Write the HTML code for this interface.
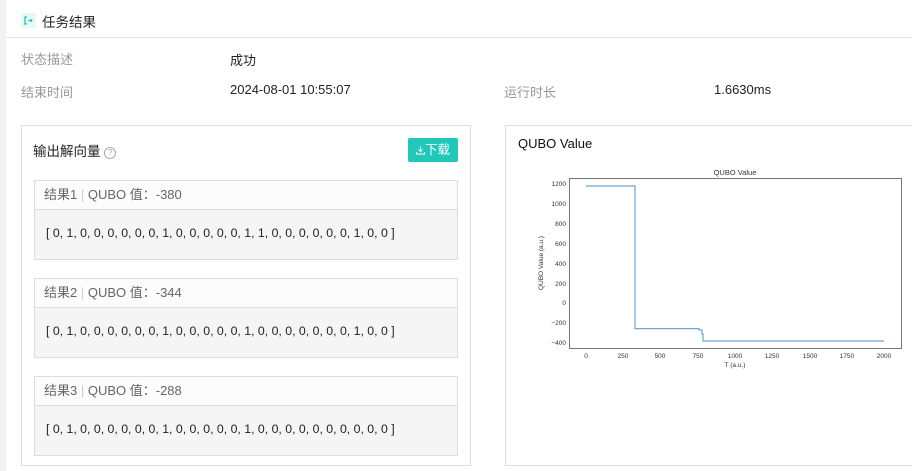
<!DOCTYPE html>
<html><head><meta charset="utf-8"><style>
html,body{margin:0;width:912px;height:471px;overflow:hidden}
body{background:#fff;font-family:"Liberation Sans","Noto Sans CJK SC",sans-serif;position:relative;color:#222}
.a{position:absolute;white-space:nowrap}
.lbl{color:#999;font-size:13px}
.val{color:#222;font-size:13px}
.card{position:absolute;border:1px solid #ddd;background:#fff;box-sizing:border-box}
.res{position:absolute;left:34px;width:424px;border:1px solid #ddd;box-sizing:border-box}
.res .h{height:28px;background:#fcfcfc;border-bottom:1px solid #ddd;font-size:13px;color:#666;line-height:28px;padding-left:9px}
.res .b{height:49px;background:#f5f5f5;font-size:12.3px;color:#222;line-height:46px;padding-left:11px}
</style></head><body>
<div class="a" style="left:0;top:0;width:6px;height:471px;background:#f2f2f2"></div>
<div class="a" style="left:6px;top:37px;width:906px;height:1px;background:#e2e2e2"></div>
<div class="a" style="left:21px;top:13px;width:15px;height:15px;background:#e8f8f7"></div>
<svg class="a" style="left:21px;top:13px" width="15" height="15"><path d="M6 4H4v7h2" stroke="#1fc2b4" stroke-width="1.3" fill="none"/><path d="M7 7.5h4M9.5 6l1.5 1.5L9.5 9" stroke="#1fc2b4" stroke-width="1.1" fill="none"/></svg>
<div class="a" style="left:42px;top:11px;font-size:13.5px;color:#222">任务结果</div>
<div class="a lbl" style="left:21px;top:49px">状态描述</div>
<div class="a val" style="left:230px;top:50px">成功</div>
<div class="a lbl" style="left:21px;top:82px">结束时间</div>
<div class="a val" style="left:230px;top:82px">2024-08-01 10:55:07</div>
<div class="a lbl" style="left:504px;top:82px">运行时长</div>
<div class="a val" style="left:714px;top:82px">1.6630ms</div>
<div class="card" style="left:21px;top:125px;width:450px;height:341px"></div>
<div class="a" style="left:33px;top:140px;font-size:13.5px;color:#222">输出解向量 <span style="display:inline-block;width:10px;height:10px;border:1px solid #aaa;border-radius:50%;font-size:8px;line-height:10px;text-align:center;color:#aaa;vertical-align:1px">?</span></div>
<div class="a" style="left:408px;top:138px;width:50px;height:24px;background:#1fc8b8;border-radius:2px;color:#fff;font-size:12.5px;line-height:24px;text-align:center"><svg width="9" height="9" style="vertical-align:-1px"><path d="M4.5 0.5v5M2.5 3.5l2 2 2-2M0.5 6v2h8V6" stroke="#fff" stroke-width="1" fill="none"/></svg>下载</div>
<div class="res" style="top:180px"><div class="h">结果1 <span style="color:#ccc">|</span> QUBO 值：-380</div><div class="b">[ 0, 1, 0, 0, 0, 0, 0, 0, 1, 0, 0, 0, 0, 0, 1, 1, 0, 0, 0, 0, 0, 0, 1, 0, 0 ]</div></div>
<div class="res" style="top:278px"><div class="h">结果2 <span style="color:#ccc">|</span> QUBO 值：-344</div><div class="b">[ 0, 1, 0, 0, 0, 0, 0, 0, 1, 0, 0, 0, 0, 0, 1, 0, 0, 0, 0, 0, 0, 0, 1, 0, 0 ]</div></div>
<div class="res" style="top:376px"><div class="h">结果3 <span style="color:#ccc">|</span> QUBO 值：-288</div><div class="b">[ 0, 1, 0, 0, 0, 0, 0, 0, 1, 0, 0, 0, 0, 0, 1, 0, 0, 0, 0, 0, 0, 0, 0, 0, 0 ]</div></div>
<div class="card" style="left:505px;top:125px;width:420px;height:341px"></div>
<div class="a" style="left:518px;top:136px;font-size:13px;color:#111">QUBO Value</div>
<svg class="a" style="left:0;top:0" width="912" height="471" font-family="Liberation Sans,sans-serif" font-size="6.5" fill="#333">
<text x="735" y="175" text-anchor="middle" font-size="7.5">QUBO Value</text>
<rect x="569.5" y="178.5" width="332" height="170" fill="none" stroke="#555" stroke-width="0.8"/>
<g text-anchor="end">
<text x="566" y="186">1200</text><text x="566" y="206">1000</text><text x="566" y="226">800</text><text x="566" y="246">600</text><text x="566" y="266">400</text><text x="566" y="286">200</text><text x="566" y="305">0</text><text x="566" y="325">−200</text><text x="566" y="345">−400</text></g>
<g text-anchor="middle">
<text x="586" y="358">0</text><text x="623" y="358">250</text><text x="660" y="358">500</text><text x="698" y="358">750</text><text x="735" y="358">1000</text><text x="772" y="358">1250</text><text x="810" y="358">1500</text><text x="847" y="358">1750</text><text x="884" y="358">2000</text>
<text x="735" y="367">T (a.u.)</text></g>
<text transform="translate(543 263) rotate(-90)" text-anchor="middle">QUBO Value (a.u.)</text>
<path d="M586 186H635V328.6H699V330H702V334H703V341H884" fill="none" stroke="#6aa7d8" stroke-width="1.2"/>
</svg>
</body></html>
